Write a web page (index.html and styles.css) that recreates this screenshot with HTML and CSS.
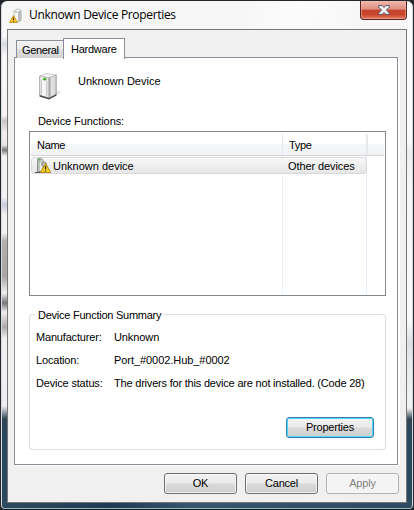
FILE: index.html
```html
<!DOCTYPE html>
<html lang="en">
<head>
<meta charset="utf-8">
<title>Unknown Device Properties</title>
<link rel="stylesheet" href="styles.css">
</head>
<body>
<div class="window">
  <header class="titlebar">
    <svg class="title-icon" width="16" height="18" viewBox="0 0 16 18">
      <path d="M5 3.5 8.5 2 12 3V13.5L9 15 5 13.5Z" fill="#f5f6f6" stroke="#c4c7c8"/>
      <path d="M9 4.5V15L12.4 13.5V3.3Z" fill="#b9bdbe"/>
      <path d="M6 5h2" stroke="#71ad6b"/>
      <path d="M4.5 8.5 8.5 15.5H.5Z" fill="#f3c52c" stroke="#c9982a"/>
      <path d="M4.5 10.5v2.5M4.5 13.8v1" stroke="#493700"/>
    </svg>
    <h1 class="title">Unknown Device Properties</h1>
    <button class="close" aria-label="Close">
      <svg width="12" height="10" viewBox="0 0 12 10">
        <path d="M.7.6H4.3L6 2.6 7.7.6H11.3V2L8.4 5 11.3 8V9.4H7.7L6 7.4 4.3 9.4H.7V8L3.6 5 .7 2Z" fill="#f7f8fa" stroke="#535666"/>
      </svg>
    </button>
  </header>
  <main class="client">
    <nav class="tabs">
      <div class="tab">General</div>
      <div class="tab active">Hardware</div>
    </nav>
    <section class="panel">
      <div class="device">
        <svg width="26" height="30" viewBox="0 0 26 30">
          <defs>
            <linearGradient id="side" x1="0" x2="1"><stop offset="0" stop-color="#999"/><stop offset=".4" stop-color="#f0f0f0"/><stop offset="1" stop-color="#b5b5b5"/></linearGradient>
            <linearGradient id="front" x1="0" x2="1"><stop offset="0" stop-color="#cdcdcd"/><stop offset=".3" stop-color="#fff"/><stop offset="1" stop-color="#e4e4e4"/></linearGradient>
          </defs>
          <path d="M15 26 24 20 20 18Z" fill="#e4e4e4"/>
          <path d="M3 4 9 1.5 19.5 3 12 6Z" fill="#f5f5f5" stroke="#bbb" stroke-width=".7"/>
          <path d="M2.5 4 12 6V26L2.5 23Z" fill="url(#front)" stroke="#999" stroke-width=".6"/>
          <path d="M12 6 19.5 3V22L12 26Z" fill="url(#side)" stroke="#a6a6a6" stroke-width=".6"/>
          <path d="M4.7 8V23M9.8 9V24.5" stroke="#b6b6b6" stroke-width=".8"/>
          <path d="M15 5V24M17.3 4.5V23" stroke="#ddd"/>
          <path d="M2.5 23V24.5L12 27.5 19.5 23.5V22L12 26Z" fill="#444"/>
          <ellipse cx="7.6" cy="7.2" rx="1.9" ry="1.4" fill="#4eae35"/>
        </svg>
        <span class="device-name">Unknown Device</span>
      </div>
      <div class="list-label">Device Functions:</div>
      <div class="list">
        <div class="list-head"><span class="col-name">Name</span><span class="col-type">Type</span></div>
        <div class="list-body">
          <div class="row">
            <svg width="17" height="17" viewBox="0 0 17 17">
              <path d="M2.5 14.5V2L5 1 8 3V14.5Z" fill="#e9eaea" stroke="#8c8f90"/>
              <path d="M3 5.5V3L5 2.3V14H3Z" fill="#bcc5bb"/>
              <path d="M3.5 2.5 5 2v3" stroke="#58ab43" fill="none"/>
              <path d="M0 15.5H7" stroke="#555"/>
              <path d="M7 9V5.5H10L12 8" fill="none" stroke="#989b9b" stroke-width="1.5"/>
              <path d="M10.5 6.3 15.7 15.5H5.3Z" fill="#f6d22d" stroke="#b98b12" stroke-linejoin="round"/>
              <path d="M10.5 8.7v3.5M10.5 13.2v1.3" stroke="#3f3508" stroke-width="1.4"/>
            </svg>
            <span class="row-name">Unknown device</span>
            <span class="row-type">Other devices</span>
          </div>
        </div>
      </div>
      <div class="group">
        <div class="legend"><i class="corner-left"></i><span>Device Function Summary</span><i class="corner-right"></i></div>
        <div class="group-body">
          <dl class="facts">
            <dt>Manufacturer:</dt><dd>Unknown</dd>
            <dt>Location:</dt><dd class="location">Port_#0002.Hub_#0002</dd>
            <dt>Device status:</dt><dd class="status">The drivers for this device are not installed. (Code 28)</dd>
          </dl>
          <button class="button focused">Properties</button>
        </div>
      </div>
    </section>
    <footer class="actions">
      <button class="button">OK</button>
      <button class="button">Cancel</button>
      <button class="button" disabled>Apply</button>
    </footer>
  </main>
</div>
</body>
</html>
```
FILE: styles.css
```css
* { box-sizing: border-box; }
body { margin: 0; background: #20252a; font: 11px/14px "Liberation Sans", Arial, sans-serif; color: #000; overflow: hidden; white-space: nowrap; }
.window {
  width: 414px; height: 510px; padding: 0 6px 6px;
  border: 1px solid #24272d; border-bottom-color: #10181f; border-radius: 7px 7px 5px 5px;
  display: flex; flex-direction: column;
  box-shadow: inset 1px 0 #d7dadd, inset -1px 0 #d7dadd, inset 0 -1px #9eb6c3;
  background:
    linear-gradient(105deg, transparent 0 240px, #ffffffa0 290px, transparent 350px) 0 0 / 100% 28px no-repeat,
    linear-gradient(90deg, #2e4a5f, #1d3b50 27%, #36566b 45%, #2d4b60) 0 100% / 100% 8px no-repeat,
    linear-gradient(#f8f8f8 0 28px, #fafafa 35px, #d8d9e5 43px, #faf8f9 55px, #f7f3f4 114px, #cac6c8 120px, #f3eff1 132px, #eae6e8 144px, #777 149px, #f5f2f3 155px, #f5f2f3 196px, #c9cad9 204px, #f5f2f3 214px, #f5f2f3 232px, #b3afaf 240px, #aaa6a6 276px, #f3f0f1 292px, #777477 302px, #f2eeef 311px, #aeaaab 326px, #f2eff0 337px, #eeeef1 405px, #314653 418px, #29475e 430px) 0 0 / 8px 100% no-repeat,
    linear-gradient(#fafafa 0 140px, #ececec 150px, #f6f6f6 180px, #fafafa 320px, #dce1e5 342px, #e8e9ec 360px, #f3f3f3 407px, #314653 418px, #29475e 430px) 100% 0 / 8px 100% no-repeat,
    #f7f7f7;
}
.titlebar { height: 28px; flex: none; display: flex; align-items: flex-start; }
.title-icon { margin: 6px 0 0 2px; }
.title { margin: 5px 0 0 4px; font: 12px/18px "Open Sans", "Noto Sans", sans-serif; letter-spacing: -.33px; }
.close {
  width: 47px; height: 19px; margin: 0 0 0 auto; padding: 0;
  border: 1px solid #5a2520; border-top: 0; border-radius: 0 0 4px 4px;
  background: linear-gradient(#f0b8ae, #df8c7e 46%, #c5432d 50%, #c9452b 75%, #e27e63);
  box-shadow: inset 0 0 0 1px #f5b9ad80;
  display: flex; align-items: center; justify-content: center;
}
.client {
  flex: 1; border: 1px solid #777; background: #f0f0f0; padding: 7px 7px 8px 6px;
  display: flex; flex-direction: column;
}
.tabs { height: 21px; padding-left: 2px; display: flex; align-items: flex-end; flex: none; position: relative; }
.tab { width: 47px; height: 18px; border: 1px solid #8c8e99; border-width: 1px 0 0 1px; background: linear-gradient(#f3f3f3, #ececec 48%, #dedede 50%, #d2d2d2); padding: 2px 0 0 5px; letter-spacing: -.35px; }
.tab.active { width: 62px; height: 21px; margin-bottom: -1px; border-width: 1px 1px 0; background: #fff; padding: 3px 0 0 7px; letter-spacing: -.25px; }
.panel { width: 384px; height: 408px; margin-top: -1px; border: 1px solid #8c8e99; background: #fff; box-shadow: 2px 1px #fff; padding: 13px 11px 0 14px; flex: none; }
.device { height: 43px; display: flex; }
.device svg { margin: 1px 0 0 8px; }
.device-name { margin: 3px 0 0 15px; }
.list-label { height: 17px; padding-left: 9px; letter-spacing: -.08px; }
.list { width: 357px; height: 165px; border: 1px solid #828790; padding: 2px 1px 1px; display: flex; flex-direction: column; }
.list-head { height: 22px; flex: none; display: flex; background: linear-gradient(#fff 45%, #f5f6f8 50%, #f2f3f6); border-bottom: 1px solid #d5d5d5; line-height: 22px; letter-spacing: -.3px; }
.col-name { width: 252px; border-right: 1px solid #e3e8ee; padding-left: 6px; }
.col-type { width: 85px; border-right: 2px solid #e7e8ea; padding-left: 6px; }
.list-body { flex: 1; padding-top: 1px; background: linear-gradient(#e8f1fa, #e8f1fa) 251px 0 / 1px 100% no-repeat, linear-gradient(#e8f1fa, #e8f1fa) 335px 0 / 1px 100% no-repeat; }
.row { height: 17px; width: 336px; border: 1px solid #d9d9d9; border-radius: 3px; background: linear-gradient(#f8f8f8, #e6e6e6); display: flex; line-height: 16px; }
.row svg { margin: -1px 0 0 3px; flex: none; }
.row-name { width: 236px; padding-left: 1px; flex: none; }
.row-type { letter-spacing: -.09px; }
.group { width: 357px; margin-top: 11px; }
.legend { height: 14px; display: flex; align-items: flex-start; letter-spacing: -.25px; }
.legend i { height: 7px; margin-top: 7px; border-top: 1px solid #d5dfe5; }
.corner-left { width: 6px; border-left: 1px solid #d5dfe5; border-top-left-radius: 4px; }
.corner-right { flex: 1; border-right: 1px solid #d5dfe5; border-top-right-radius: 4px; }
.legend span { padding: 1px 3px 0; }
.group-body { height: 129px; border: 1px solid #d5dfe5; border-top: 0; border-radius: 0 0 4px 4px; padding: 9px 11px 0 6px; display: flex; flex-direction: column; }
.facts { margin: 0; display: grid; grid-template-columns: 78px 1fr; grid-auto-rows: 23px; letter-spacing: -.18px; }
.facts dd { margin: 0; letter-spacing: -.1px; }
.facts .location { letter-spacing: -.06px; }
.facts .status { letter-spacing: -.2px; }
.button {
  width: 73px; height: 21px; padding: 0; border: 1px solid #707070; border-radius: 3px;
  background: linear-gradient(#f2f2f2, #ebebeb 49%, #dadada 51%, #cfcfcf); box-shadow: inset 0 0 0 1px #fafafacc;
  font: inherit; line-height: 19px; letter-spacing: -.2px; color: #000;
}
.button.focused { width: 88px; align-self: flex-end; margin-top: 18px; border-color: #3c7fb1; box-shadow: inset 0 0 0 1px #48d8fb; }
.button:disabled { border-color: #adb2b5; background: #f4f4f4; color: #838383; }
.actions { margin-top: 8px; display: flex; justify-content: flex-end; gap: 8px; }
```
